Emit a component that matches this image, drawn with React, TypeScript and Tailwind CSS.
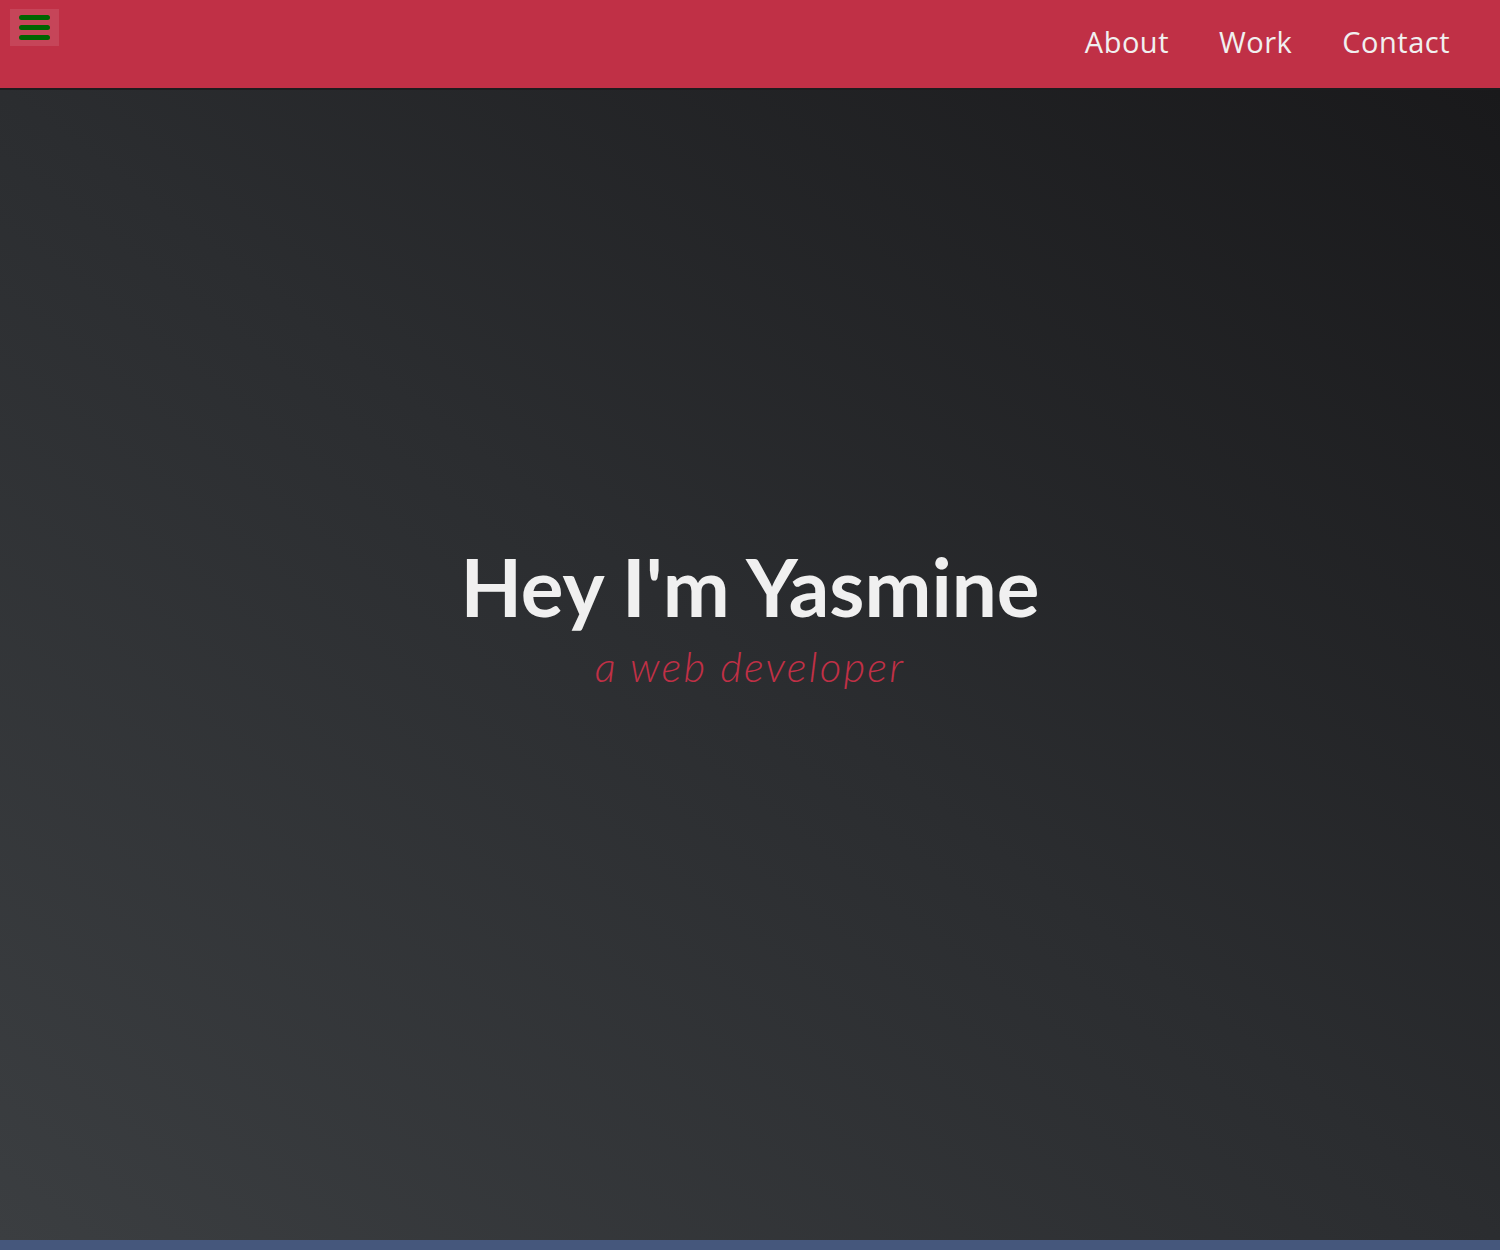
const links = ['About', 'Work', 'Contact'];

const App = () => {
  return (
    <div className="min-h-screen flex flex-col" style={{ fontFamily: 'Lato, "Noto Sans", sans-serif' }}>
      <header className="h-[90px] bg-[#c03046] border-b-2 border-[#1c1c1e] flex items-start justify-between shrink-0">
        <button className="mt-[9px] ml-[10px] w-[49px] h-[37px] bg-white/10 flex flex-col items-center justify-center gap-[5px]">
          <span className="block w-[31px] h-[5px] rounded-full bg-[#006400]" />
          <span className="block w-[31px] h-[5px] rounded-full bg-[#006400]" />
          <span className="block w-[31px] h-[5px] rounded-full bg-[#006400]" />
        </button>
        <nav className="flex gap-[50px] pr-[50px] pt-[22px]">
          {links.map((l) => (
            <a
              key={l}
              href="#"
              className="text-[29px] leading-[40px] text-[#f0f0f0] tracking-[0.5px]"
              style={{ fontFamily: '"Open Sans", "Noto Sans", sans-serif' }}
            >
              {l}
            </a>
          ))}
        </nav>
      </header>
      <main className="h-[1150px] bg-gradient-to-tr from-[#3b3e41] via-[#2b2d30] to-[#19191b] flex flex-col items-center justify-center pb-[94px]">
        <h1 className="text-[80px] leading-[82px] font-bold text-[#f0f0f0] tracking-[0px]">Hey I'm Yasmine</h1>
        <p className="text-[42px] leading-[50px] font-light italic text-[#c03046] tracking-[2.2px] mt-[14px]">a web developer</p>
      </main>
      <div className="h-[10px] bg-[#45577c]" />
    </div>
  );
};

export default App;
